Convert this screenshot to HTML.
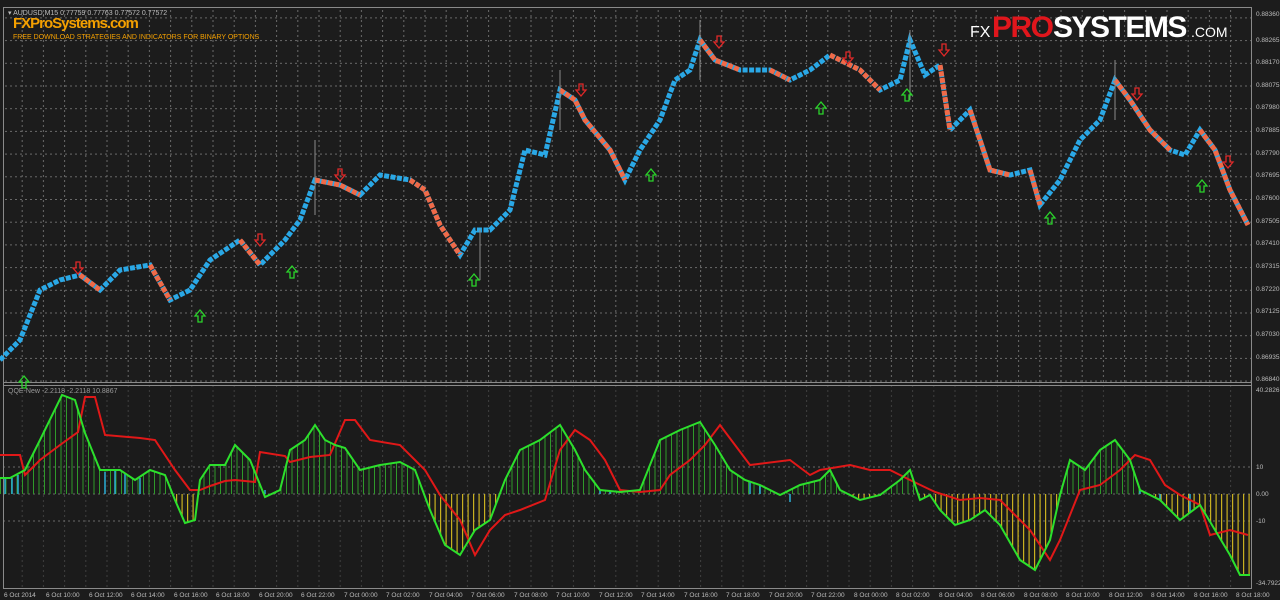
<!DOCTYPE html>
<html><head><meta charset="utf-8"><style>
html,body{margin:0;padding:0;background:#1c1c1c;width:1280px;height:600px;overflow:hidden;font-family:"Liberation Sans",sans-serif}
svg{display:block}
</style></head><body>
<svg width="1280" height="600" viewBox="0 0 1280 600" xmlns="http://www.w3.org/2000/svg">
<defs>
<pattern id="vg" width="21.2" height="600" patternUnits="userSpaceOnUse" x="0">
<line x1="1" y1="0" x2="1" y2="600" stroke="#6a6a6a" stroke-width="1" stroke-dasharray="2,3"/></pattern>
<pattern id="hg" width="1280" height="22.7" patternUnits="userSpaceOnUse" y="17.4">
<line x1="0" y1="0.5" x2="1280" y2="0.5" stroke="#6a6a6a" stroke-width="1" stroke-dasharray="2,3"/></pattern>
<pattern id="pg" width="5.5" height="600" patternUnits="userSpaceOnUse">
<rect x="0" y="0" width="1" height="600" fill="#2f9a2a"/></pattern>
<pattern id="py" width="5.5" height="600" patternUnits="userSpaceOnUse">
<rect x="0" y="0" width="1.2" height="600" fill="#c8b020"/></pattern>
<clipPath id="top"><rect x="0" y="385" width="1252" height="109"/></clipPath>
<clipPath id="bot"><rect x="0" y="494" width="1252" height="100"/></clipPath>
</defs>
<rect width="1280" height="600" fill="#1c1c1c"/>
<rect x="3" y="8" width="1249" height="376" fill="url(#hg)"/>
<rect x="3" y="8" width="1249" height="580" fill="url(#vg)"/>
<rect x="3" y="386" width="1249" height="202" fill="#1c1c1c" opacity="0.55"/>
<g stroke="#6a6a6a" stroke-dasharray="2,3"><line x1="3" y1="467" x2="1252" y2="467"/><line x1="3" y1="494" x2="1252" y2="494"/><line x1="3" y1="521" x2="1252" y2="521"/></g>
<rect x="3.5" y="7.5" width="1248" height="581" fill="none" stroke="#8a8a8a"/>
<line x1="3" y1="382.5" x2="1252" y2="382.5" stroke="#8a8a8a"/>
<line x1="3" y1="385.5" x2="1252" y2="385.5" stroke="#8a8a8a"/>
<!-- price -->
<polyline fill="none" stroke="#2aa8e6" stroke-width="5" stroke-dasharray="5,1.5" points="0,360 20,340 40,290 60,280 80,275 100,290 120,270 150,265 170,300 190,290 210,260 240,240 260,265 285,240 300,220 315,180 340,185 360,195 380,175 410,180 425,190 440,225 460,255 475,230 490,230 510,210 525,150 545,155 560,90 575,100 585,120 610,150 625,180 640,150 660,120 675,80 690,70 700,40 715,60 740,70 770,70 790,80 810,70 830,55 860,70 880,90 900,80 910,40 925,75 940,65 950,130 970,110 990,170 1010,175 1030,170 1040,205 1060,180 1080,140 1100,120 1115,80 1130,100 1150,130 1170,150 1185,155 1200,130 1215,150 1230,190 1248,225"/>
<g fill="none" stroke="#f06a48" stroke-width="5" stroke-dasharray="5,1.5">
<polyline points="80,275 100,290"/><polyline points="150,265 170,300"/><polyline points="240,240 260,265"/><polyline points="315,180 340,185 360,195"/><polyline points="410,180 425,190 440,225 460,255"/><polyline points="560,90 575,100 585,120 610,150 625,180"/><polyline points="700,40 715,60 740,70"/><polyline points="770,70 790,80"/><polyline points="830,55 860,70 880,90"/><polyline points="940,65 950,130"/><polyline points="970,110 990,170 1010,175"/><polyline points="1030,170 1040,205"/><polyline points="1115,80 1130,100 1150,130 1170,150"/><polyline points="1200,130 1215,150 1230,190 1248,225"/>
</g>
<g stroke="#8a8a8a" stroke-width="1"><line x1="315" y1="140" x2="315" y2="215"/><line x1="560" y1="70" x2="560" y2="130"/><line x1="700" y1="20" x2="700" y2="80"/><line x1="910" y1="30" x2="910" y2="100"/><line x1="1115" y1="60" x2="1115" y2="120"/><line x1="480" y1="230" x2="480" y2="280"/></g>
<g fill="none" stroke="#2bd42b" stroke-width="1.3">
<path d="M0,-6 L-5,0 L-2,0 L-2,6 L2,6 L2,0 L5,0 Z" transform="translate(24,382)"/>
<path d="M0,-6 L-5,0 L-2,0 L-2,6 L2,6 L2,0 L5,0 Z" transform="translate(200,316)"/>
<path d="M0,-6 L-5,0 L-2,0 L-2,6 L2,6 L2,0 L5,0 Z" transform="translate(292,272)"/>
<path d="M0,-6 L-5,0 L-2,0 L-2,6 L2,6 L2,0 L5,0 Z" transform="translate(474,280)"/>
<path d="M0,-6 L-5,0 L-2,0 L-2,6 L2,6 L2,0 L5,0 Z" transform="translate(651,175)"/>
<path d="M0,-6 L-5,0 L-2,0 L-2,6 L2,6 L2,0 L5,0 Z" transform="translate(821,108)"/>
<path d="M0,-6 L-5,0 L-2,0 L-2,6 L2,6 L2,0 L5,0 Z" transform="translate(907,95)"/>
<path d="M0,-6 L-5,0 L-2,0 L-2,6 L2,6 L2,0 L5,0 Z" transform="translate(1050,218)"/>
<path d="M0,-6 L-5,0 L-2,0 L-2,6 L2,6 L2,0 L5,0 Z" transform="translate(1202,186)"/>
</g>
<g fill="none" stroke="#e02828" stroke-width="1.3">
<path d="M0,6 L-5,0 L-2,0 L-2,-6 L2,-6 L2,0 L5,0 Z" transform="translate(78,268)"/>
<path d="M0,6 L-5,0 L-2,0 L-2,-6 L2,-6 L2,0 L5,0 Z" transform="translate(260,240)"/>
<path d="M0,6 L-5,0 L-2,0 L-2,-6 L2,-6 L2,0 L5,0 Z" transform="translate(340,175)"/>
<path d="M0,6 L-5,0 L-2,0 L-2,-6 L2,-6 L2,0 L5,0 Z" transform="translate(581,90)"/>
<path d="M0,6 L-5,0 L-2,0 L-2,-6 L2,-6 L2,0 L5,0 Z" transform="translate(719,42)"/>
<path d="M0,6 L-5,0 L-2,0 L-2,-6 L2,-6 L2,0 L5,0 Z" transform="translate(848,58)"/>
<path d="M0,6 L-5,0 L-2,0 L-2,-6 L2,-6 L2,0 L5,0 Z" transform="translate(944,50)"/>
<path d="M0,6 L-5,0 L-2,0 L-2,-6 L2,-6 L2,0 L5,0 Z" transform="translate(1137,94)"/>
<path d="M0,6 L-5,0 L-2,0 L-2,-6 L2,-6 L2,0 L5,0 Z" transform="translate(1228,162)"/>
</g>
<polygon clip-path="url(#top)" fill="url(#pg)" points="0,494 0,478 10,478 25,470 40,440 62,395 75,400 78,410 85,433 100,470 120,470 135,480 150,470 165,475 175,500 185,523 195,520 200,480 210,465 225,465 235,445 250,460 265,497 280,490 290,450 305,440 315,425 325,440 335,445 345,448 360,470 380,465 400,462 415,470 430,510 445,545 460,555 475,530 490,520 505,480 520,450 540,440 560,425 575,450 585,470 600,490 620,492 640,490 660,440 680,430 700,422 715,445 730,470 745,480 760,485 780,495 800,485 820,480 830,470 840,490 860,500 880,495 900,480 910,470 920,500 930,495 940,510 955,525 970,520 985,510 1000,525 1020,560 1035,570 1050,540 1060,495 1070,460 1085,470 1100,450 1115,440 1130,460 1140,490 1160,500 1180,520 1200,505 1215,530 1230,555 1240,575 1250,575 1250,494"/>
<polygon clip-path="url(#bot)" fill="url(#py)" points="0,494 0,478 10,478 25,470 40,440 62,395 75,400 78,410 85,433 100,470 120,470 135,480 150,470 165,475 175,500 185,523 195,520 200,480 210,465 225,465 235,445 250,460 265,497 280,490 290,450 305,440 315,425 325,440 335,445 345,448 360,470 380,465 400,462 415,470 430,510 445,545 460,555 475,530 490,520 505,480 520,450 540,440 560,425 575,450 585,470 600,490 620,492 640,490 660,440 680,430 700,422 715,445 730,470 745,480 760,485 780,495 800,485 820,480 830,470 840,490 860,500 880,495 900,480 910,470 920,500 930,495 940,510 955,525 970,520 985,510 1000,525 1020,560 1035,570 1050,540 1060,495 1070,460 1085,470 1100,450 1115,440 1130,460 1140,490 1160,500 1180,520 1200,505 1215,530 1230,555 1240,575 1250,575 1250,494"/>
<g stroke="#2ab0d8" stroke-width="1.5">
<line x1="5" y1="494" x2="5" y2="478"/><line x1="12" y1="494" x2="12" y2="478"/><line x1="18" y1="494" x2="18" y2="475"/><line x1="105" y1="494" x2="105" y2="472"/><line x1="115" y1="494" x2="115" y2="471"/><line x1="125" y1="494" x2="125" y2="474"/><line x1="140" y1="494" x2="140" y2="478"/><line x1="265" y1="494" x2="265" y2="490"/><line x1="600" y1="494" x2="600" y2="490"/><line x1="610" y1="494" x2="610" y2="491"/><line x1="750" y1="494" x2="750" y2="482"/><line x1="760" y1="494" x2="760" y2="485"/><line x1="790" y1="494" x2="790" y2="502"/><line x1="880" y1="494" x2="880" y2="496"/><line x1="1140" y1="494" x2="1140" y2="490"/><line x1="1160" y1="494" x2="1160" y2="500"/><line x1="1190" y1="494" x2="1190" y2="512"/>
</g>
<polyline fill="none" stroke="#e01818" stroke-width="2" points="0,455 20,455 25,475 40,460 60,445 78,432 85,397 95,397 105,435 140,438 155,440 175,470 190,490 200,490 210,486 225,481 235,480 255,482 260,452 285,456 290,462 310,457 330,455 345,420 355,420 370,440 400,445 425,470 440,495 460,520 475,555 490,530 505,515 520,510 545,500 560,450 575,430 590,440 605,460 620,490 640,492 660,490 670,475 690,460 705,445 720,425 735,445 750,465 790,460 810,475 820,470 850,465 870,470 890,470 910,480 935,492 960,500 980,498 1000,500 1010,510 1030,530 1050,560 1060,540 1080,490 1100,485 1120,470 1135,455 1150,460 1165,485 1180,495 1200,505 1210,535 1230,530 1248,535"/>
<polyline fill="none" stroke="#2ce02c" stroke-width="2" points="0,478 10,478 25,470 40,440 62,395 75,400 78,410 85,433 100,470 120,470 135,480 150,470 165,475 175,500 185,523 195,520 200,480 210,465 225,465 235,445 250,460 265,497 280,490 290,450 305,440 315,425 325,440 335,445 345,448 360,470 380,465 400,462 415,470 430,510 445,545 460,555 475,530 490,520 505,480 520,450 540,440 560,425 575,450 585,470 600,490 620,492 640,490 660,440 680,430 700,422 715,445 730,470 745,480 760,485 780,495 800,485 820,480 830,470 840,490 860,500 880,495 900,480 910,470 920,500 930,495 940,510 955,525 970,520 985,510 1000,525 1020,560 1035,570 1050,540 1060,495 1070,460 1085,470 1100,450 1115,440 1130,460 1140,490 1160,500 1180,520 1200,505 1215,530 1230,555 1240,575 1250,575"/>
<text x="8" y="15" font-size="7" fill="#bdbdbd">▾ AUDUSD,M15  0.77759 0.77763 0.77572 0.77572</text>
<text x="13" y="28" font-size="15" font-weight="bold" fill="#f4a000" letter-spacing="-1" transform="scale(1,1)">FXProSystems.com</text>
<text x="13" y="39" font-size="7" fill="#f4a000">FREE DOWNLOAD STRATEGIES AND INDICATORS FOR BINARY OPTIONS</text>
<text x="970" y="37" font-size="16" fill="#ffffff">FX</text>
<text x="992" y="37" font-size="30" font-weight="bold" fill="#e0161c" letter-spacing="-1.5">PRO</text>
<text x="1053" y="37" font-size="30" font-weight="bold" fill="#ffffff" letter-spacing="-1.5">SYSTEMS</text>
<text x="1191" y="37" font-size="14" fill="#ffffff">.COM</text>
<text x="8" y="393" font-size="7" fill="#9a9a9a">QQE-New -2.2118 -2.2118 10.8867</text>
<g font-size="6.5" fill="#bdbdbd">
<text x="1256" y="16">0.88360</text><text x="1256" y="42">0.88265</text><text x="1256" y="64">0.88170</text><text x="1256" y="87">0.88075</text><text x="1256" y="109">0.87980</text><text x="1256" y="132">0.87885</text><text x="1256" y="155">0.87790</text><text x="1256" y="177">0.87695</text><text x="1256" y="200">0.87600</text><text x="1256" y="223">0.87505</text><text x="1256" y="245">0.87410</text><text x="1256" y="268">0.87315</text><text x="1256" y="291">0.87220</text><text x="1256" y="313">0.87125</text><text x="1256" y="336">0.87030</text><text x="1256" y="359">0.86935</text><text x="1256" y="381">0.86840</text>
<text x="1256" y="392">40.2826</text><text x="1256" y="469">10</text><text x="1256" y="496">0.00</text><text x="1256" y="523">-10</text><text x="1256" y="585">-34.7922</text>
</g>
<g font-size="6.5" fill="#bdbdbd">
<text x="4" y="597">6 Oct 2014</text><text x="46" y="597">6 Oct 10:00</text><text x="89" y="597">6 Oct 12:00</text><text x="131" y="597">6 Oct 14:00</text><text x="174" y="597">6 Oct 16:00</text><text x="216" y="597">6 Oct 18:00</text><text x="259" y="597">6 Oct 20:00</text><text x="301" y="597">6 Oct 22:00</text><text x="344" y="597">7 Oct 00:00</text><text x="386" y="597">7 Oct 02:00</text><text x="429" y="597">7 Oct 04:00</text><text x="471" y="597">7 Oct 06:00</text><text x="514" y="597">7 Oct 08:00</text><text x="556" y="597">7 Oct 10:00</text><text x="599" y="597">7 Oct 12:00</text><text x="641" y="597">7 Oct 14:00</text><text x="684" y="597">7 Oct 16:00</text><text x="726" y="597">7 Oct 18:00</text><text x="769" y="597">7 Oct 20:00</text><text x="811" y="597">7 Oct 22:00</text><text x="854" y="597">8 Oct 00:00</text><text x="896" y="597">8 Oct 02:00</text><text x="939" y="597">8 Oct 04:00</text><text x="981" y="597">8 Oct 06:00</text><text x="1024" y="597">8 Oct 08:00</text><text x="1066" y="597">8 Oct 10:00</text><text x="1109" y="597">8 Oct 12:00</text><text x="1151" y="597">8 Oct 14:00</text><text x="1194" y="597">8 Oct 16:00</text><text x="1236" y="597">8 Oct 18:00</text>
</g>
</svg>
</body></html>
